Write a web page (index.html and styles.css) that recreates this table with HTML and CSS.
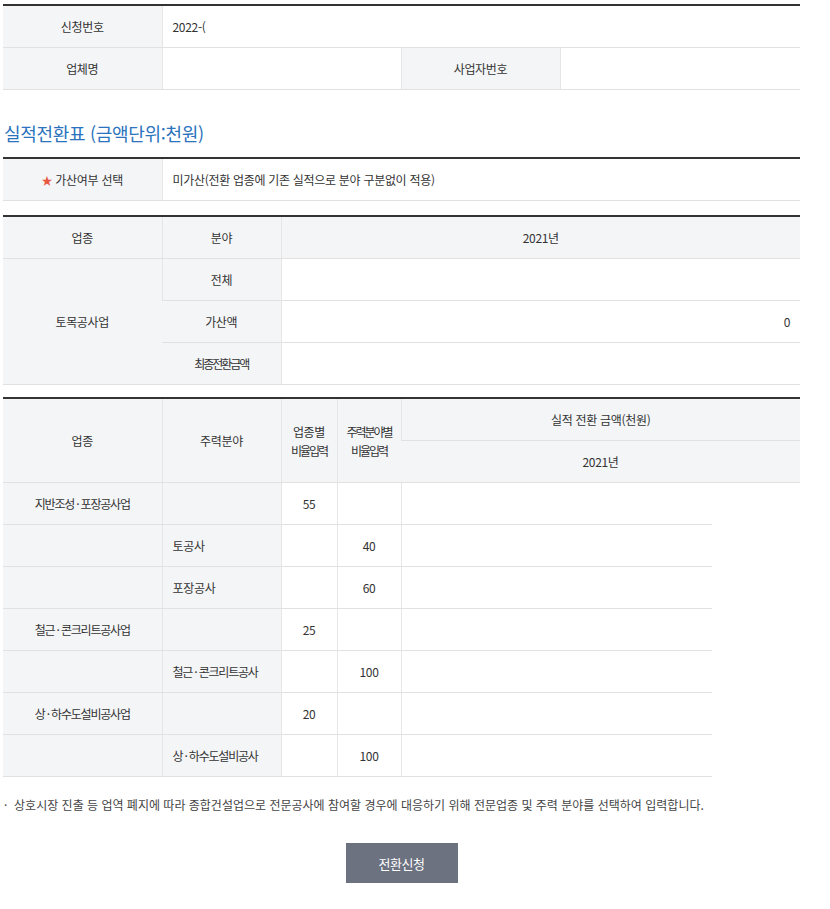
FILE: index.html
```html
<!DOCTYPE html>
<html lang="ko">
<head>
<meta charset="UTF-8">
<meta name="viewport" content="width=device-width, initial-scale=1.0">
<title>실적전환 신청</title>
<link rel="stylesheet" href="styles.css">
</head>
<body>

<div class="wrap">
    <table class="tbl">
        <colgroup>
            <col style="width:159px"><col style="width:239px"><col style="width:159px"><col style="width:240px">
        </colgroup>
        <tr>
            <th>신청번호</th>
            <td colspan="3" class="left">2022-(</td>
        </tr>
        <tr>
            <th>업체명</th>
            <td></td>
            <th>사업자번호</th>
            <td></td>
        </tr>
    </table>

    <h3 class="title">실적전환표 (금액단위:천원)</h3>

    <table class="tbl">
        <colgroup>
            <col style="width:159px"><col style="width:638px">
        </colgroup>
        <tr>
            <th><span class="star">★</span> 가산여부 선택</th>
            <td class="left">미가산(전환 업종에 기존 실적으로 분야 구분없이 적용)</td>
        </tr>
    </table>

    <table class="tbl gap">
        <colgroup>
            <col style="width:159px"><col style="width:119px"><col style="width:519px">
        </colgroup>
        <tr>
            <th>업종</th>
            <th>분야</th>
            <th>2021년</th>
        </tr>
        <tr>
            <th rowspan="3">토목공사업</th>
            <th>전체</th>
            <td></td>
        </tr>
        <tr>
            <th>가산액</th>
            <td class="right">0</td>
        </tr>
        <tr>
            <th><span class="tight">최종전환금액</span></th>
            <td></td>
        </tr>
    </table>

    <table class="tbl gap2">
        <colgroup>
            <col style="width:159px"><col style="width:119px"><col style="width:56px"><col style="width:64px"><col style="width:311px"><col style="width:88px">
        </colgroup>
        <tr>
            <th rowspan="2">업종</th>
            <th rowspan="2">주력분야</th>
            <th rowspan="2" class="small">업종별<br><span class="tight">비율입력</span></th>
            <th rowspan="2" class="small"><span class="tight">주력분야별</span><br><span class="tight">비율입력</span></th>
            <th colspan="2">실적 전환 금액(천원)</th>
        </tr>
        <tr>
            <th colspan="2">2021년</th>
        </tr>
        <tr>
            <th><span class="tight2">지반조성 · 포장공사업</span></th>
            <th></th>
            <td>55</td>
            <td></td>
            <td></td>
        </tr>
        <tr>
            <th></th>
            <th class="left">토공사</th>
            <td></td>
            <td>40</td>
            <td></td>
        </tr>
        <tr>
            <th></th>
            <th class="left">포장공사</th>
            <td></td>
            <td>60</td>
            <td></td>
        </tr>
        <tr>
            <th><span class="tight2">철근 · 콘크리트공사업</span></th>
            <th></th>
            <td>25</td>
            <td></td>
            <td></td>
        </tr>
        <tr>
            <th></th>
            <th class="left"><span class="tight2">철근 · 콘크리트공사</span></th>
            <td></td>
            <td>100</td>
            <td></td>
        </tr>
        <tr>
            <th><span class="tight2">상 · 하수도설비공사업</span></th>
            <th></th>
            <td>20</td>
            <td></td>
            <td></td>
        </tr>
        <tr>
            <th></th>
            <th class="left"><span class="tight2">상 · 하수도설비공사</span></th>
            <td></td>
            <td>100</td>
            <td></td>
        </tr>
    </table>

    <p class="note">· &nbsp;상호시장 진출 등 업역 폐지에 따라 종합건설업으로 전문공사에 참여할 경우에 대응하기 위해 전문업종 및 주력 분야를 선택하여 입력합니다.</p>

    <div class="btns">
        <button type="button" class="btn">전환신청</button>
    </div>
</div>

</body>
</html>
```

FILE: styles.css
```css
body {
    margin: 0;
    font-family: "Noto Sans CJK KR", "Noto Sans", sans-serif;
    font-size: 12px;
    color: #333;
    background-color: #fff;
}
.wrap {
    width: 797px;
    padding: 4px 0 0 3px;
}
.tbl {
    width: 797px;
    table-layout: fixed;
    border-collapse: collapse;
    border-top: 2px solid #333;
}
.tbl.gap {
    margin-top: 14px;
}
.tbl.gap2 {
    margin-top: 12px;
}
.tbl th,
.tbl td {
    height: 41px;
    padding: 0 10px;
    border-bottom: 1px solid #e1e1e1;
    border-left: 1px solid #e6e6e6;
    text-align: center;
    font-weight: normal;
    letter-spacing: -0.3px;
    line-height: 20px;
}
.tbl tr > :first-child {
    border-left: none;
}
.tbl th {
    background-color: #f4f5f7;
}
.tbl td {
    background-color: #fff;
}
.tbl .left {
    text-align: left;
}
.tbl .right {
    text-align: right;
}
.tbl .small {
    padding: 0;
    line-height: 19px;
}
.tight {
    letter-spacing: -2px;
}
.tight2 {
    letter-spacing: -1.2px;
}
.star {
    color: #e9573f;
    font-size: 11px;
}
.title {
    margin: 31px 0 12px 1px;
    font-size: 18px;
    font-weight: normal;
    line-height: 24px;
    letter-spacing: -0.3px;
    color: #2b73bd;
}
.note {
    margin: 19px 0 0 1px;
    font-size: 12px;
    letter-spacing: 0;
    color: #444;
}
.btns {
    margin-top: 30px;
    text-align: center;
}
.btn {
    width: 112px;
    height: 40px;
    border: none;
    background-color: #6c727f;
    color: #fff;
    font-family: "Noto Sans CJK KR", sans-serif;
    font-size: 13px;
    letter-spacing: -0.5px;
    cursor: pointer;
}
```
